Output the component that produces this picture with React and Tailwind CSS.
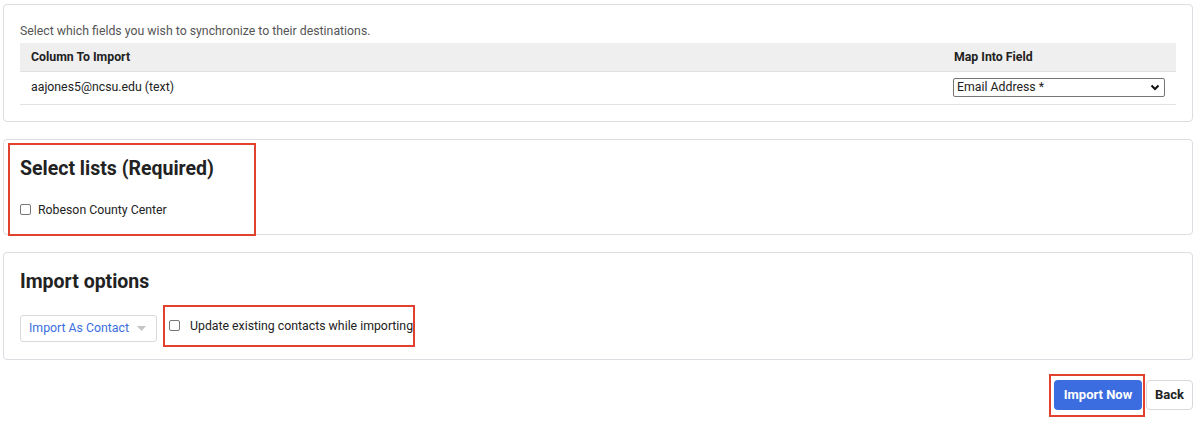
import React from 'react';

const font = { fontFamily: 'Roboto, "Liberation Sans", Arial, sans-serif' };

const Card = ({ className = '', children }) => (
  <div className={`ml-[3px] mr-[7px] rounded border border-[#dcdde3] bg-white ${className}`}>{children}</div>
);

const App = () => {
  return (
    <div className="w-[1200px] h-[422px] bg-white text-[#222] overflow-hidden" style={font}>
      {/* field mapping */}
      <Card className="mt-[4px] h-[118px] px-[16px] pt-[18px]">
        <p className="text-[12.3px] text-[#555] leading-[16px] mb-[4px]">
          Select which fields you wish to synchronize to their destinations.
        </p>
        <table className="w-full text-[12.3px] border-collapse">
          <thead>
            <tr className="bg-[#efefef] h-[28px] border-b border-[#e2e2e2]">
              <th className="text-left font-bold pl-[11px]">Column To Import</th>
              <th className="text-left font-bold w-[223px] pl-[1px]">Map Into Field</th>
            </tr>
          </thead>
          <tbody>
            <tr className="h-[33px] border-b border-[#e2e2e2]">
              <td className="pl-[11px]">aajones5@ncsu.edu (text)</td>
              <td>
                <div className="w-[212px] h-[19px] border border-[#767676] rounded-[2px] flex items-center justify-between pl-[3px] pr-[4px]">
                  <span>Email Address *</span>
                  <svg width="10" height="7" viewBox="0 0 10 7">
                    <path d="M1.5 1.5 L5 5 L8.5 1.5" stroke="#111" strokeWidth="2" fill="none" />
                  </svg>
                </div>
              </td>
            </tr>
          </tbody>
        </table>
      </Card>

      {/* select lists */}
      <Card className="mt-[17px] h-[96px] relative">
        <div className="absolute left-[4px] top-[3px] w-[248px] h-[93px] border-2 border-[#e3412f]" />
        <div className="px-[16px] pt-[16px]">
          <h2 className="text-[19.5px] font-bold leading-[26px] text-[#222]">Select lists (Required)</h2>
          <label className="flex items-center mt-[20px] text-[12.3px] leading-[16px]">
            <span className="shrink-0 w-[11px] h-[11px] border border-[#777] rounded-[2px] bg-white mr-[7px] mb-[2px]" />
            Robeson County Center
          </label>
        </div>
      </Card>

      {/* import options */}
      <Card className="mt-[17px] h-[108px] px-[16px] pt-[16px]">
        <h2 className="text-[19.5px] font-bold leading-[26px] text-[#222]">Import options</h2>
        <div className="flex items-start mt-[10px]">
          <div className="mt-[10px] w-[137px] h-[27px] border border-[#d8d9de] rounded-[3px] flex items-center pl-[8px] text-[12.3px] text-[#3b6de0] whitespace-nowrap">
            Import As Contact
            <svg className="ml-[8px]" width="9" height="5" viewBox="0 0 9 5">
              <path d="M0 0 L9 0 L4.5 5 Z" fill="#c4c4c4" />
            </svg>
          </div>
          <div className="ml-[6px] w-[252px] h-[42px] border-2 border-[#e3412f] flex items-center pl-[4px] text-[12.3px] whitespace-nowrap">
            <span className="shrink-0 w-[11px] h-[11px] border border-[#777] rounded-[2px] bg-white mr-[10px] mb-[2px]" />
            Update existing contacts while importing
          </div>
        </div>
      </Card>

      {/* actions */}
      <div className="flex justify-end items-start mt-[14px] pr-[7px]">
        <div className="border-2 border-[#e3412f] pl-[3px] pr-[1px] pt-[4px] pb-[5px]">
          <button className="h-[30px] w-[88px] rounded-[4px] bg-[#3b6de0] text-white text-[13px] font-bold">
            Import Now
          </button>
        </div>
        <button className="mt-[6px] ml-[1px] h-[30px] w-[47px] rounded-[4px] border border-[#d8d9de] bg-white text-[13px] font-bold text-[#222]">
          Back
        </button>
      </div>
    </div>
  );
};

export default App;
